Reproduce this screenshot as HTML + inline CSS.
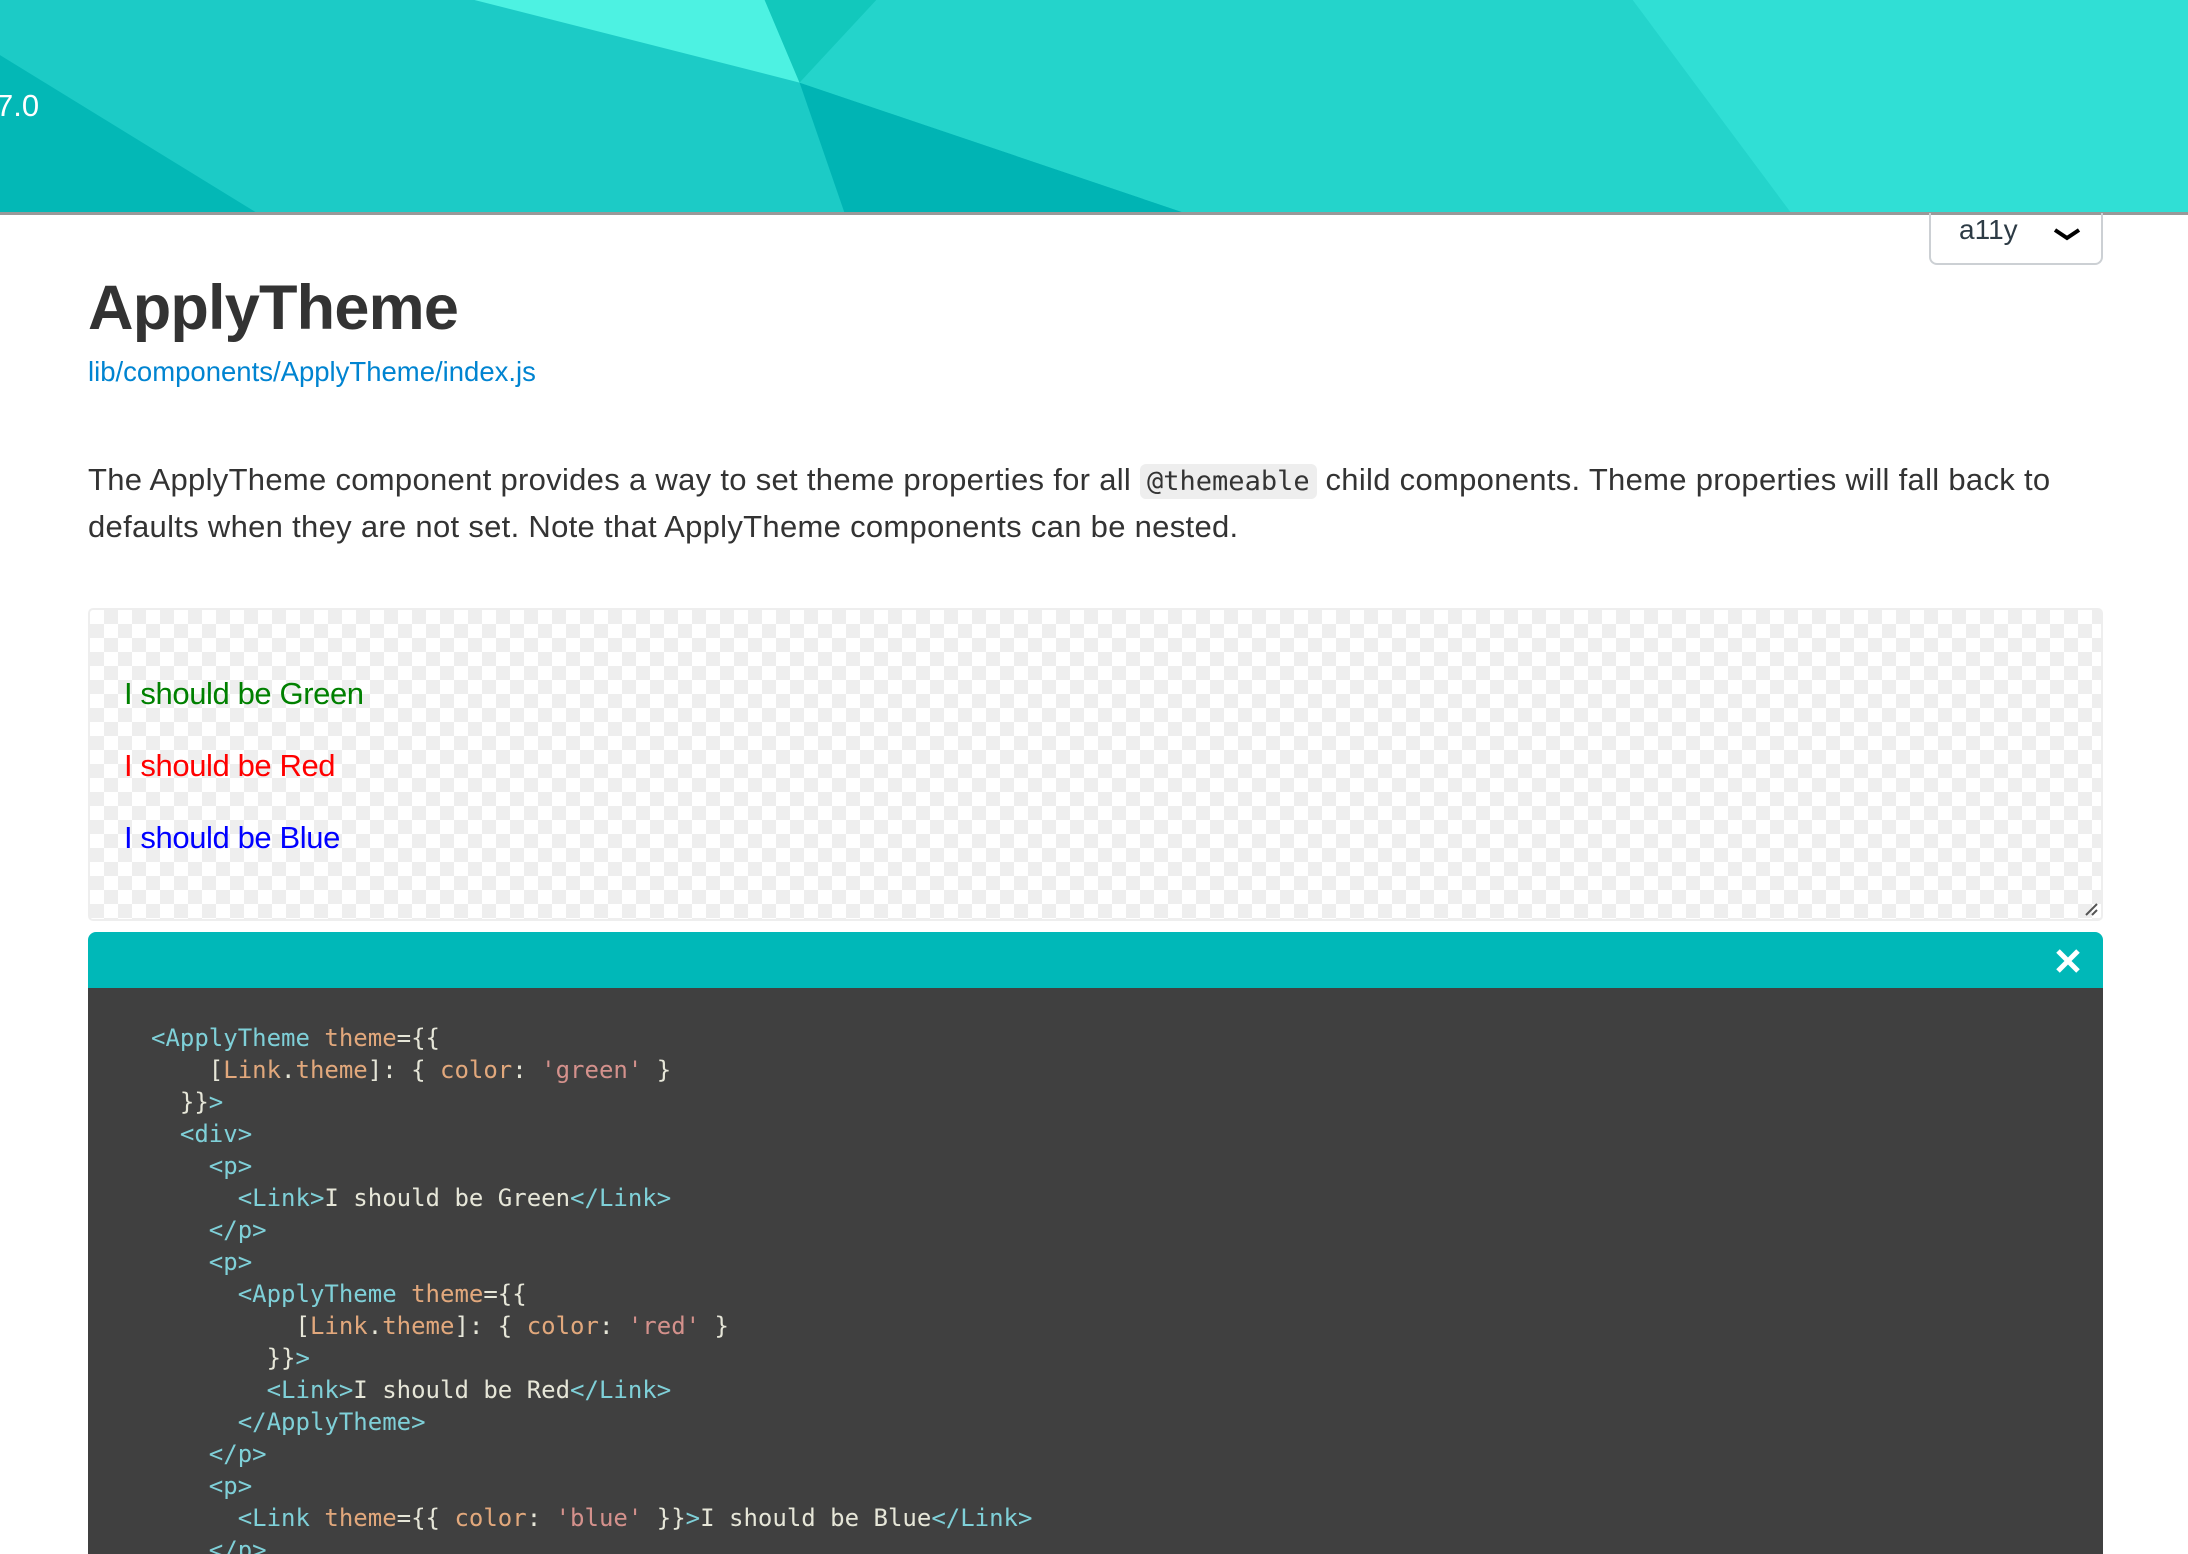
<!DOCTYPE html>
<html><head><meta charset="utf-8"><style>
*{margin:0;padding:0;box-sizing:border-box}
html,body{width:2188px;height:1554px;overflow:hidden}
body{background:#fff;font-family:"Liberation Sans",sans-serif;position:relative}
.hdr{position:absolute;left:0;top:0;width:2188px;height:215px;border-bottom:3px solid #999}
.ver{position:absolute;left:-4px;top:88px;color:#fff;font-size:31px}
.sel{position:absolute;left:1929px;top:213px;width:174px;height:52px;border:2px solid #ccd0d4;border-top:none;border-radius:0 0 8px 8px;color:#2d3b45;font-size:28px}
.sel span{position:absolute;left:28px;top:1px}
.sel svg{position:absolute;left:120px;top:12px}
h1{position:absolute;left:88px;top:272px;font-size:63px;font-weight:bold;color:#333;letter-spacing:-0.8px}
.lnk{position:absolute;left:88px;top:356px;font-size:27.5px;color:#0084d1}
.p{position:absolute;left:88px;top:457px;font-size:31px;color:#333;line-height:45px;white-space:nowrap;letter-spacing:0.3px}
code{font-family:"DejaVu Sans Mono",monospace;font-size:27px;background:#eee;border-radius:6px;padding:2px 7px;letter-spacing:0}
.ex{position:absolute;left:88px;top:608px;width:2015px;height:313px;border:2px solid #eee;border-radius:5px;
background-color:#fff;background-image:conic-gradient(#eee 25%,#fff 0 50%,#eee 0 75%,#fff 0);background-size:28px 28px}
.ex div{position:absolute;left:34px;font-size:31px;letter-spacing:-0.4px}
.bar{position:absolute;left:88px;top:932px;width:2015px;height:56px;background:#00b8b8;border-radius:8px 8px 0 0}
.code{position:absolute;left:88px;top:988px;width:2015px;height:566px;background:#404040;overflow:hidden}
pre{position:absolute;left:63px;top:34px;font-family:"DejaVu Sans Mono",monospace;font-size:24px;line-height:32px;color:#e6e6d8}
.t{color:#7fd0d8}.a{color:#e2a87c}.s{color:#d4918c}
</style></head><body>
<svg class="hdr" width="2188" height="215" viewBox="0 0 1568 154" preserveAspectRatio="none">
<rect width="1568" height="154" fill="#1ccbc6"/>
<polygon points="0,40 183,154 0,154" fill="#03b8b6"/>
<polygon points="340,0 548,0 573,60" fill="#4df2e2"/>
<polygon points="548,0 628,0 573,60" fill="#12c8bc"/>
<polygon points="573,60 847,154 605,154" fill="#00b4b4"/>
<polygon points="573,60 628,0 1170,0 1283,154 847,154" fill="#24d4cb"/>
<polygon points="1170,0 1568,0 1568,154 1283,154" fill="#30dfd5"/>
</svg>
<div class="ver">7.0</div>
<div class="sel"><span>a11y</span><svg width="32" height="20" viewBox="0 0 32 20"><path d="M4 5 L16 13 L28 5" stroke="#000" stroke-width="4" fill="none"/></svg></div>
<h1>ApplyTheme</h1>
<div class="lnk">lib/components/ApplyTheme/index.js</div>
<div class="p">The ApplyTheme component provides a way to set theme properties for all <code>@themeable</code> child components. Theme properties will fall back to<br>defaults when they are not set. Note that ApplyTheme components can be nested.</div>
<div class="ex">
<div style="top:66px;color:#008000">I should be Green</div>
<div style="top:138px;color:#f00">I should be Red</div>
<div style="top:210px;color:#00f">I should be Blue</div>
<svg style="position:absolute;right:2px;bottom:2px" width="16" height="16"><path d="M14 3 L3 14 M14 9 L9 14" stroke="#555" stroke-width="2"/></svg>
</div>
<div class="bar"><svg style="position:absolute;left:1967px;top:16px" width="26" height="26"><path d="M3 3 L23 23 M23 3 L3 23" stroke="#fff" stroke-width="5"/></svg></div>
<div class="code"><pre><span class="t">&lt;ApplyTheme</span> <span class="a">theme</span>={{
    [<span class="a">Link</span>.<span class="a">theme</span>]: { <span class="a">color</span>: <span class="s">'green'</span> }
  }}<span class="t">&gt;</span>
  <span class="t">&lt;div&gt;</span>
    <span class="t">&lt;p&gt;</span>
      <span class="t">&lt;Link&gt;</span>I should be Green<span class="t">&lt;/Link&gt;</span>
    <span class="t">&lt;/p&gt;</span>
    <span class="t">&lt;p&gt;</span>
      <span class="t">&lt;ApplyTheme</span> <span class="a">theme</span>={{
          [<span class="a">Link</span>.<span class="a">theme</span>]: { <span class="a">color</span>: <span class="s">'red'</span> }
        }}<span class="t">&gt;</span>
        <span class="t">&lt;Link&gt;</span>I should be Red<span class="t">&lt;/Link&gt;</span>
      <span class="t">&lt;/ApplyTheme&gt;</span>
    <span class="t">&lt;/p&gt;</span>
    <span class="t">&lt;p&gt;</span>
      <span class="t">&lt;Link</span> <span class="a">theme</span>={{ <span class="a">color</span>: <span class="s">'blue'</span> }}<span class="t">&gt;</span>I should be Blue<span class="t">&lt;/Link&gt;</span>
    <span class="t">&lt;/p&gt;</span>
  <span class="t">&lt;/div&gt;</span>
<span class="t">&lt;/ApplyTheme&gt;</span></pre></div>
</body></html>
